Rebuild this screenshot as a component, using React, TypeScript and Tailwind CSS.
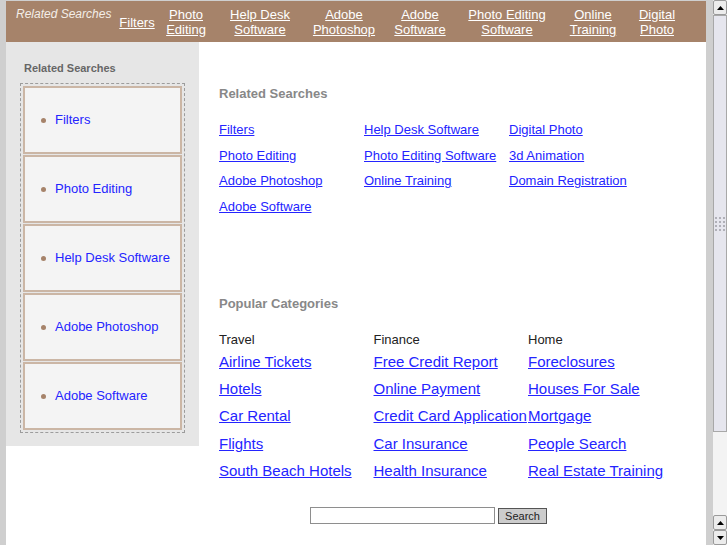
const font = { fontFamily: '"Liberation Sans", Arial, sans-serif' }

const topLinks = [
  { lines: ['Filters'], w: 'w-[48px]' },
  { lines: ['Photo', 'Editing'], w: 'w-[50px]' },
  { lines: ['Help Desk', 'Software'], w: 'w-[98px]' },
  { lines: ['Adobe', 'Photoshop'], w: 'w-[70px]' },
  { lines: ['Adobe', 'Software'], w: 'w-[82px]' },
  { lines: ['Photo Editing', 'Software'], w: 'w-[92px]' },
  { lines: ['Online', 'Training'], w: 'w-[80px]' },
  { lines: ['Digital', 'Photo'], w: 'w-[48px]' },
]

const sideLinks = ['Filters', 'Photo Editing', 'Help Desk Software', 'Adobe Photoshop', 'Adobe Software']

const related = [
  ['Filters', 'Photo Editing', 'Adobe Photoshop', 'Adobe Software'],
  ['Help Desk Software', 'Photo Editing Software', 'Online Training'],
  ['Digital Photo', '3d Animation', 'Domain Registration'],
]

const categories = [
  { title: 'Travel', links: ['Airline Tickets', 'Hotels', 'Car Rental', 'Flights', 'South Beach Hotels'] },
  { title: 'Finance', links: ['Free Credit Report', 'Online Payment', 'Credit Card Application', 'Car Insurance', 'Health Insurance'] },
  { title: 'Home', links: ['Foreclosures', 'Houses For Sale', 'Mortgage', 'People Search', 'Real Estate Training'] },
]

function ArrowButton({ up }: { up: boolean }) {
  return (
    <div className="h-[15px] w-[14px] shrink-0 bg-[#ececec] border border-[#9a9a9a] rounded-[2px] flex items-center justify-center">
      <svg width="7" height="4" viewBox="0 0 7 4">
        {up ? <path d="M0 4 L3.5 0 L7 4 Z" fill="#000" /> : <path d="M0 0 L3.5 4 L7 0 Z" fill="#000" />}
      </svg>
    </div>
  )
}

function Scrollbar() {
  return (
    <div className="w-[14px] h-full flex flex-col bg-[#f1f1f1]">
      <ArrowButton up />
      <div className="h-[417px] shrink-0 bg-[#e6e6ee] border border-[#a8a8a8] flex items-center justify-center">
        <div className="grid grid-cols-3 gap-[2px]">
          {Array.from({ length: 12 }).map((_, i) => (
            <div key={i} className="w-[2px] h-[2px] bg-[#b0b0b8]" />
          ))}
        </div>
      </div>
      <div className="flex-1 bg-[#f3f3f3]" />
      <ArrowButton up />
      <ArrowButton up={false} />
    </div>
  )
}

export default function App() {
  return (
    <div className="w-[727px] h-[545px] overflow-hidden flex bg-[#cfcfcf]" style={font}>
      <div className="flex-1 min-h-0 pl-[6px] pr-[7px] pt-px flex flex-col">
        {/* Header */}
        <div className="h-[41px] shrink-0 bg-[#a6836a] flex text-white">
          <div className="w-[107px] pl-[10px] pt-[6px] text-[12px] italic leading-[15px] text-[#f4eee8]">
            Related Searches
          </div>
          {topLinks.map((l) => (
            <div key={l.lines.join(' ')} className={`${l.w} flex flex-col items-center justify-center text-[13px] leading-[15px] pt-px`}>
              {l.lines.map((t) => (
                <a key={t} href="#" className="underline whitespace-nowrap">
                  {t}
                </a>
              ))}
            </div>
          ))}
        </div>

        <div className="flex flex-1 bg-white">
          {/* Sidebar */}
          <div className="w-[193px] self-start bg-[#e6e6e6] px-[14px] pt-[19px] pb-[13px]">
            <div className="pl-[4px] text-[11px] font-bold text-[#666666] leading-[14px] mb-[8px]">Related Searches</div>
            <div className="border border-dashed border-[#9c9c9c] p-[2px] flex flex-col gap-px">
              {sideLinks.map((s) => (
                <div key={s} className="h-[68px] bg-[#f4f4f4] border-2 border-[#cbb6a5] flex items-center pl-[16px]">
                  <span className="w-[5px] h-[5px] rounded-full bg-[#a6836a] mr-[9px]" />
                  <a href="#" className="text-[13px] text-[#2424ff]">
                    {s}
                  </a>
                </div>
              ))}
            </div>
          </div>

          {/* Main */}
          <div className="flex-1 pl-[20px] pt-[44px]">
            <h2 className="text-[13px] font-bold text-[#888888] leading-[15px]">Related Searches</h2>
            <div className="flex mt-[21px]">
              {related.map((col, i) => (
                <div key={i} className="w-[145px] flex flex-col">
                  {col.map((t) => (
                    <a key={t} href="#" className="text-[13px] leading-[15px] h-[25.7px] text-[#2424ff] underline whitespace-nowrap">
                      {t}
                    </a>
                  ))}
                </div>
              ))}
            </div>

            <h2 className="mt-[71px] text-[13px] font-bold text-[#888888] leading-[15px]">Popular Categories</h2>
            <div className="flex mt-[21px]">
              {categories.map((c) => (
                <div key={c.title} className="w-[154.5px] flex flex-col">
                  <div className="text-[13px] leading-[15px] text-[#222222] mb-[6px]">{c.title}</div>
                  {c.links.map((t) => (
                    <a key={t} href="#" className="text-[15px] leading-[17px] h-[27.3px] text-[#2424ff] underline whitespace-nowrap">
                      {t}
                    </a>
                  ))}
                </div>
              ))}
            </div>

            <div className="flex items-center gap-[3px] pl-[91px] mt-[18px]">
              <input className="w-[185px] h-[17px] border border-[#8e8e8e] bg-white" />
              <button className="w-[49px] h-[16px] border border-[#555] bg-[#cccccc] text-[11px] leading-[12px] text-[#222]">
                Search
              </button>
            </div>
          </div>
        </div>
      </div>
      <Scrollbar />
    </div>
  )
}
